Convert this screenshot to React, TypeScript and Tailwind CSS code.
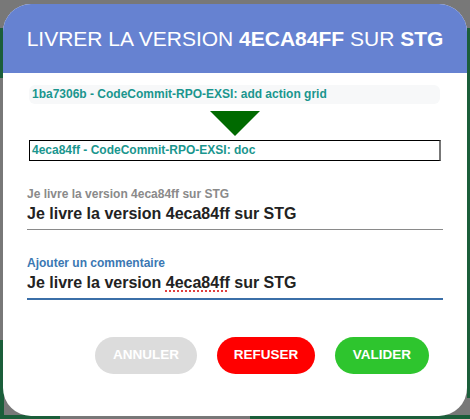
export default function App() {
  return (
    <div className="relative flex h-[419px] w-[470px] items-center justify-center overflow-hidden bg-[#787878] font-['Liberation_Sans',Arial,sans-serif]">
      {/* dimmed page behind the dialog */}
      <div className="absolute left-0 top-[28px] h-[50px] w-[4px] bg-[#1b5e3a]" />
      <div className="absolute left-0 top-[340px] h-[79px] w-[4px] bg-[#1b5e3a]" />
      <div className="absolute bottom-0 left-0 h-[4px] w-[60px] bg-[#1b5e3a]" />
      <div className="absolute bottom-0 right-0 h-[4px] w-[220px] bg-[#1b5e3a]" />
      <div className="absolute right-0 top-[28px] h-[370px] w-[3px] bg-[#1b5e3a]" />

      <div className="relative flex h-[412px] w-[464px] flex-col overflow-hidden rounded-[28px] bg-white">
        <div className="flex h-[69px] shrink-0 items-center justify-center bg-[#6682d1] pt-[2px] text-[21px] text-white">
          <span>
            LIVRER LA VERSION <b>4ECA84FF</b> SUR <b>STG</b>
          </span>
        </div>

        <div className="flex flex-col px-[24px]">
          <div className="mt-[12px] ml-[2px] mr-[3px] flex h-[19px] items-center rounded-[6px] bg-[#f7f8f9] px-[3px] text-[12px] font-bold text-[#1a968e]">
            1ba7306b - CodeCommit-RPO-EXSI: add action grid
          </div>

          <div className="mt-[7px] flex justify-center">
            <svg width="50" height="25" viewBox="0 0 50 25">
              <polygon points="0,0 50,0 25,25" fill="#006a00" />
            </svg>
          </div>

          <div className="mt-[4px] ml-[2px] mr-[2px] flex h-[21px] items-center border border-black border-r-2 border-r-[#777] px-[2px] text-[12px] font-bold text-[#1a968e]">
            4eca84ff - CodeCommit-RPO-EXSI: doc
          </div>

          <div className="mt-[26px] text-[12px] font-bold leading-[14px] text-[#8a8a8a]">
            Je livre la version 4eca84ff sur STG
          </div>
          <div className="mt-[3px] border-b border-[#8a8a8a] pb-[5px] text-[16px] font-bold leading-[20px] text-[#222]">
            Je livre la version 4eca84ff sur STG
          </div>

          <div className="mt-[26px] text-[12px] font-bold leading-[14px] text-[#3b78b3]">
            Ajouter un commentaire
          </div>
          <div className="mt-[3px] border-b-2 border-[#3b6fa8] pb-[5px] text-[16px] font-bold leading-[20px] text-[#222]">
            Je livre la version{" "}
            <span className="underline decoration-[#e04040] decoration-dotted decoration-[2px] underline-offset-[3px]">
              4eca84ff
            </span>{" "}
            sur STG
          </div>
        </div>

        <div className="mt-[37px] flex justify-end gap-[20px] pr-[38px]">
          <button className="h-[37px] w-[102px] rounded-full bg-[#dcdcdc] text-[13.5px] font-bold text-white">
            ANNULER
          </button>
          <button className="h-[37px] w-[98px] rounded-full bg-[#ff0000] text-[13.5px] font-bold text-white">
            REFUSER
          </button>
          <button className="h-[37px] w-[94px] rounded-full bg-[#2ec52e] text-[13.5px] font-bold text-white">
            VALIDER
          </button>
        </div>
      </div>
    </div>
  );
}
